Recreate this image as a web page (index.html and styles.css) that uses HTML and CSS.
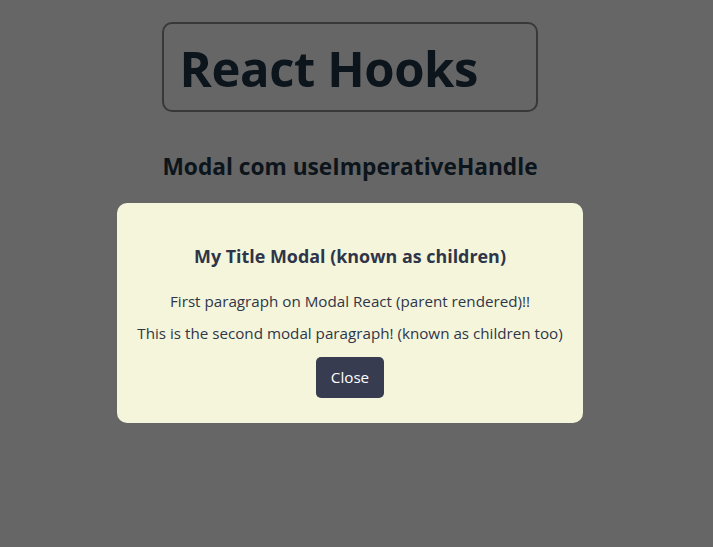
FILE: index.html
```html
<!DOCTYPE html>
<html lang="pt">
<head>
<meta charset="utf-8">
<title>React Hooks</title>
<link rel="stylesheet" href="styles.css">
</head>
<body>
<div class="page">
  <div class="head">
    <h1 class="brand">React Hooks</h1>
    <h2 class="subtitle">Modal com useImperativeHandle</h2>
  </div>
</div>
<div class="overlay"></div>
<div class="modal">
  <h3 class="modal-title">My Title Modal (known as children)</h3>
  <p class="modal-text">First paragraph on Modal React (parent rendered)!!</p>
  <p class="modal-text">This is the second modal paragraph! (known as children too)</p>
  <button class="close-btn" type="button">Close</button>
</div>
</body>
</html>
```
FILE: styles.css
```css
html, body {
  margin: 0;
  height: 100%;
}
body {
  background: #ffffff;
  color: #213547;
  font-family: "Open Sans", "Noto Sans", sans-serif;
}
.page {
  width: 700px;
  display: flex;
  justify-content: center;
  padding-top: 22px;
}
.head {
  display: flex;
  flex-direction: column;
  align-items: stretch;
}
.brand {
  margin: 0;
  border: 2px solid #8c8c8c;
  border-radius: 10px;
  padding: 17px 15px 15px 15px;
  font-size: 49px;
  line-height: 54px;
  font-weight: 700;
  text-align: left;
  letter-spacing: -0.4px;
}
.subtitle {
  margin: 37px 0 0;
  font-size: 22.7px;
  line-height: 36px;
  font-weight: 700;
  text-align: center;
  white-space: nowrap;
}
.overlay {
  position: fixed;
  inset: 0;
  background: rgba(0, 0, 0, 0.6);
}
.modal {
  position: absolute;
  top: 203px;
  left: 117px;
  width: 466px;
  height: 220px;
  box-sizing: border-box;
  padding: 39px 10px 0;
  background: #f5f5dc;
  border-radius: 10px;
  text-align: center;
  color: #2f3548;
}
.modal-title {
  margin: 0 0 19px;
  font-size: 17.9px;
  line-height: 28px;
  font-weight: 700;
}
.modal-text {
  margin: 0 0 8px;
  font-size: 15.2px;
  line-height: 24px;
  white-space: nowrap;
}
.close-btn {
  margin-top: 4px;
  font-family: inherit;
  font-size: 15.2px;
  line-height: 25px;
  padding: 8px 15px;
  height: 41px;
  border: 0;
  border-radius: 5px;
  background: #383c50;
  color: #ffffff;
  cursor: pointer;
}
```
